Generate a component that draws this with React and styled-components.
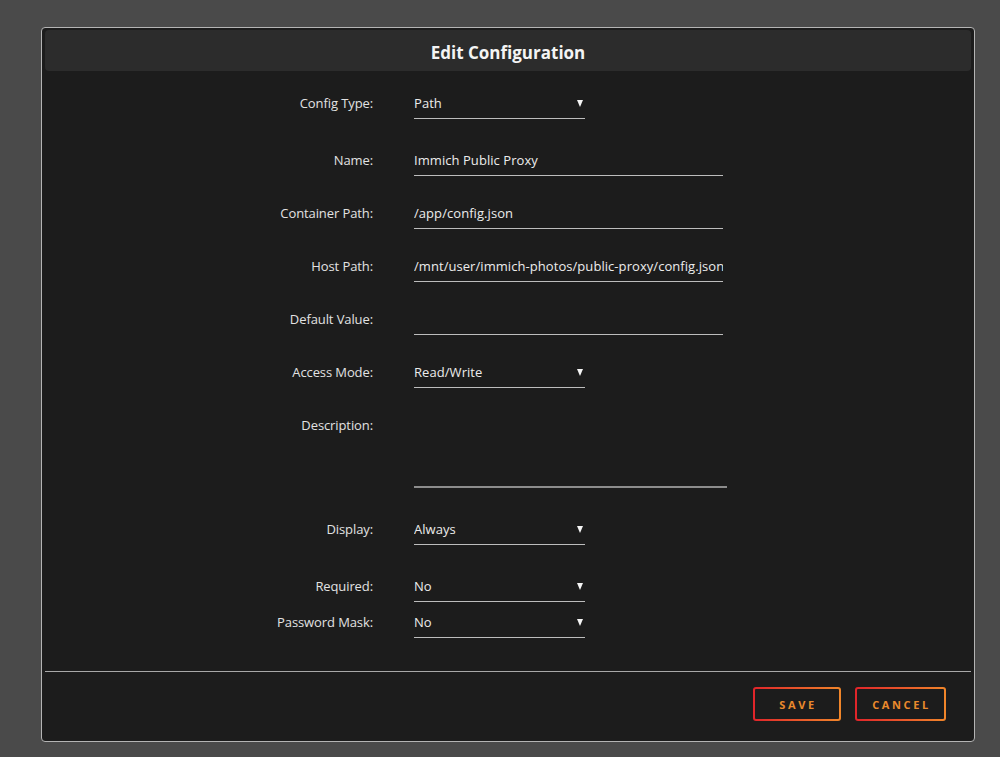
import React from "react";
import styled, { createGlobalStyle } from "styled-components";

const Global = createGlobalStyle`
  html, body { margin: 0; padding: 0; background: #4a4a4a; }
  body { font-family: "Open Sans", "Noto Sans", sans-serif; color: #e4e4e4; }
  * { box-sizing: border-box; }
`;

const Page = styled.div`
  width: 1000px;
  height: 757px;
  padding: 27px 0 0 41px;
`;

const Dialog = styled.div`
  width: 934px;
  height: 715px;
  background: #1c1c1c;
  border: 1px solid #b4b4b4;
  border-radius: 4px;
  padding: 2px 3px 0 3px;
  display: flex;
  flex-direction: column;
`;

const Header = styled.div`
  height: 41px;
  padding-top: 3px;
  background: #2c2c2c;
  border-radius: 4px;
  display: flex;
  align-items: center;
  justify-content: center;
  font-size: 17px;
  font-weight: 700;
  color: #f4f4f4;
`;

const Form = styled.div`
  padding-top: 19px;
  display: flex;
  flex-direction: column;
  height: 567px;
`;

const Row = styled.div`
  display: grid;
  grid-template-columns: 328px ${(p) => p.$w}px;
  column-gap: 41px;
  align-items: start;
  margin-top: ${(p) => p.$gap || 0}px;
`;

const Label = styled.div`
  text-align: right;
  font-size: 13px;
  line-height: 20px;
  padding-top: 3px;
  color: #e2e2e2;
  letter-spacing: -0.1px;
`;

const Control = styled.div`
  height: 29px;
  padding: 3px 0 5px 0;
  border-bottom: 1px solid #bdbdbd;
  font-size: 13px;
  line-height: 20px;
  color: #ececec;
  white-space: nowrap;
  overflow: hidden;
  letter-spacing: 0.06px;
  display: flex;
  justify-content: space-between;
  align-items: center;
`;

const Arrow = styled.span`
  width: 0;
  height: 0;
  margin-right: 2px;
  border-left: 3.5px solid transparent;
  border-right: 3.5px solid transparent;
  border-top: 7px solid #f4f4f4;
`;

const TextArea = styled.div`
  height: 76px;
  border-bottom: 2px solid #8c8c8c;
`;

const Divider = styled.div`
  height: 1px;
  background: #a8a8a8;
  margin-top: 33px;
`;

const Footer = styled.div`
  display: flex;
  justify-content: flex-end;
  gap: 14px;
  padding: 15px 25px 0 0;
`;

const Button = styled.button`
  height: 34px;
  width: ${(p) => p.$w}px;
  border: 2px solid transparent;
  border-radius: 3px;
  background: linear-gradient(#1c1c1c, #1c1c1c) padding-box,
    linear-gradient(90deg, #e0242a, #f0862a) border-box;
  color: #ea8a2c;
  font-family: "Open Sans", "Noto Sans", sans-serif;
  font-size: 11px;
  font-weight: 700;
  letter-spacing: 2.6px;
  padding: 0 0 0 2px;
  cursor: pointer;
`;

const Select = ({ value }) => (
  <Control>
    <span>{value}</span>
    <Arrow />
  </Control>
);

export default function App() {
  return (
    <>
      <Global />
      <Page>
        <Dialog>
          <Header>Edit Configuration</Header>
          <Form>
            <Row $w={171}>
              <Label>Config Type:</Label>
              <Select value="Path" />
            </Row>
            <Row $w={309} $gap={28}>
              <Label>Name:</Label>
              <Control>Immich Public Proxy</Control>
            </Row>
            <Row $w={309} $gap={24}>
              <Label>Container Path:</Label>
              <Control>/app/config.json</Control>
            </Row>
            <Row $w={309} $gap={24}>
              <Label>Host Path:</Label>
              <Control>/mnt/user/immich-photos/public-proxy/config.json</Control>
            </Row>
            <Row $w={309} $gap={24}>
              <Label>Default Value:</Label>
              <Control />
            </Row>
            <Row $w={171} $gap={24}>
              <Label>Access Mode:</Label>
              <Select value="Read/Write" />
            </Row>
            <Row $w={313} $gap={24}>
              <Label>Description:</Label>
              <TextArea />
            </Row>
            <Row $w={171} $gap={28}>
              <Label>Display:</Label>
              <Select value="Always" />
            </Row>
            <Row $w={171} $gap={28}>
              <Label>Required:</Label>
              <Select value="No" />
            </Row>
            <Row $w={171} $gap={7}>
              <Label>Password Mask:</Label>
              <Select value="No" />
            </Row>
          </Form>
          <Divider />
          <Footer>
            <Button $w={88}>SAVE</Button>
            <Button $w={91}>CANCEL</Button>
          </Footer>
        </Dialog>
      </Page>
    </>
  );
}
